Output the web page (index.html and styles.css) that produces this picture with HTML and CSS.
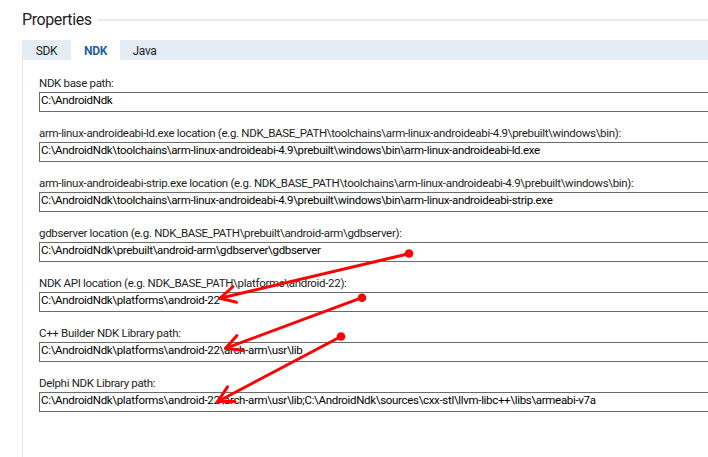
FILE: index.html
```html
<!DOCTYPE html>
<html lang="en">
<head>
<meta charset="utf-8">
<title>Properties</title>
<link rel="stylesheet" href="styles.css">
</head>
<body>
<div class="page">
  <div class="header">
    <div class="title">Properties</div>
    <div class="rule"></div>
  </div>
  <div class="tabs">
    <div class="tab">SDK</div>
    <div class="tab active">NDK</div>
    <div class="tab">Java</div>
  </div>
  <div class="panel">
    <div class="field">
      <div class="label">NDK base path:</div>
      <div class="input">C:\AndroidNdk</div>
    </div>
    <div class="field">
      <div class="label">arm-linux-androideabi-ld.exe location (e.g. NDK_BASE_PATH\toolchains\arm-linux-androideabi-4.9\prebuilt\windows\bin):</div>
      <div class="input">C:\AndroidNdk\toolchains\arm-linux-androideabi-4.9\prebuilt\windows\bin\arm-linux-androideabi-ld.exe</div>
    </div>
    <div class="field">
      <div class="label">arm-linux-androideabi-strip.exe location (e.g. NDK_BASE_PATH\toolchains\arm-linux-androideabi-4.9\prebuilt\windows\bin):</div>
      <div class="input">C:\AndroidNdk\toolchains\arm-linux-androideabi-4.9\prebuilt\windows\bin\arm-linux-androideabi-strip.exe</div>
    </div>
    <div class="field">
      <div class="label">gdbserver location (e.g. NDK_BASE_PATH\prebuilt\android-arm\gdbserver):</div>
      <div class="input">C:\AndroidNdk\prebuilt\android-arm\gdbserver\gdbserver</div>
    </div>
    <div class="field">
      <div class="label">NDK API location (e.g. NDK_BASE_PATH\platforms\android-22):</div>
      <div class="input">C:\AndroidNdk\platforms\android-22</div>
    </div>
    <div class="field">
      <div class="label">C++ Builder NDK Library path:</div>
      <div class="input">C:\AndroidNdk\platforms\android-22\arch-arm\usr\lib</div>
    </div>
    <div class="field">
      <div class="label">Delphi NDK Library path:</div>
      <div class="input">C:\AndroidNdk\platforms\android-22\arch-arm\usr\lib;C:\AndroidNdk\sources\cxx-stl\llvm-libc++\libs\armeabi-v7a</div>
    </div>
  </div>
</div>
<svg class="annotations" width="708" height="457" viewBox="0 0 708 457" aria-hidden="true">
  <g fill="none" stroke="#f00" stroke-width="3" stroke-linecap="round" stroke-linejoin="round">
    <line x1="408.7" y1="253.7" x2="220" y2="298.3"/>
    <polyline points="233,286.5 220,298.3 236.5,302.3"/>
    <line x1="362" y1="297.7" x2="225.5" y2="348.3"/>
    <polyline points="237,335.5 225.5,348.3 243,350.5"/>
    <line x1="341" y1="336.5" x2="217.8" y2="401.5"/>
    <polyline points="227.5,386.8 217.8,401.5 235,401.5"/>
  </g>
  <g fill="#f00">
    <circle cx="409" cy="253.5" r="4.3"/>
    <circle cx="362" cy="297.7" r="4.3"/>
    <circle cx="341" cy="336.5" r="4.3"/>
  </g>
</svg>
</body>
</html>
```
FILE: styles.css
```css
html, body {
  margin: 0;
  height: 100%;
}

body {
  background: #ffffff;
  color: #1e1e1e;
  font-family: Roboto, "Liberation Sans", sans-serif;
  overflow: hidden;
  position: relative;
}

.page {
  height: 100%;
  padding-left: 22px;
  display: flex;
  flex-direction: column;
  box-sizing: border-box;
}

.header {
  height: 40px;
  display: flex;
  align-items: flex-start;
  gap: 6px;
  flex: none;
}

.title {
  margin-top: 10px;
  font-size: 16px;
  line-height: 20px;
  letter-spacing: -0.4px;
  color: #1e1e1e;
  white-space: nowrap;
}

.rule {
  flex: 1;
  height: 2px;
  margin-top: 19px;
  background: #e6ebf0;
}

.tabs {
  height: 20px;
  display: flex;
  background: #e5ecf4;
  flex: none;
}

.tab {
  width: 49px;
  text-align: center;
  font-size: 12px;
  line-height: 20px;
  padding-top: 1px;
  box-sizing: border-box;
  letter-spacing: -0.3px;
  color: #1e1e1e;
}

.tab.active {
  background: #ffffff;
  color: #1f62a7;
  font-weight: 700;
}

.panel {
  flex: 1;
  border-left: 1px solid #e2e8ee;
  padding: 16px 0 0 16px;
  display: flex;
  flex-direction: column;
  gap: 14px;
  overflow: hidden;
}

.field {
  display: flex;
  flex-direction: column;
  gap: 2px;
}

.label {
  font-size: 11.5px;
  line-height: 14px;
  letter-spacing: -0.32px;
  white-space: nowrap;
  color: #1e1e1e;
}

.input {
  height: 20px;
  box-sizing: border-box;
  border: 1px solid #6a6a6a;
  border-right: none;
  padding: 0 0 0 1px;
  margin-right: -4px;
  font-size: 11.5px;
  line-height: 15px;
  letter-spacing: -0.32px;
  white-space: nowrap;
  overflow: hidden;
  color: #000000;
  background: #ffffff;
}

.annotations {
  position: absolute;
  left: 0;
  top: 0;
  pointer-events: none;
}
```
